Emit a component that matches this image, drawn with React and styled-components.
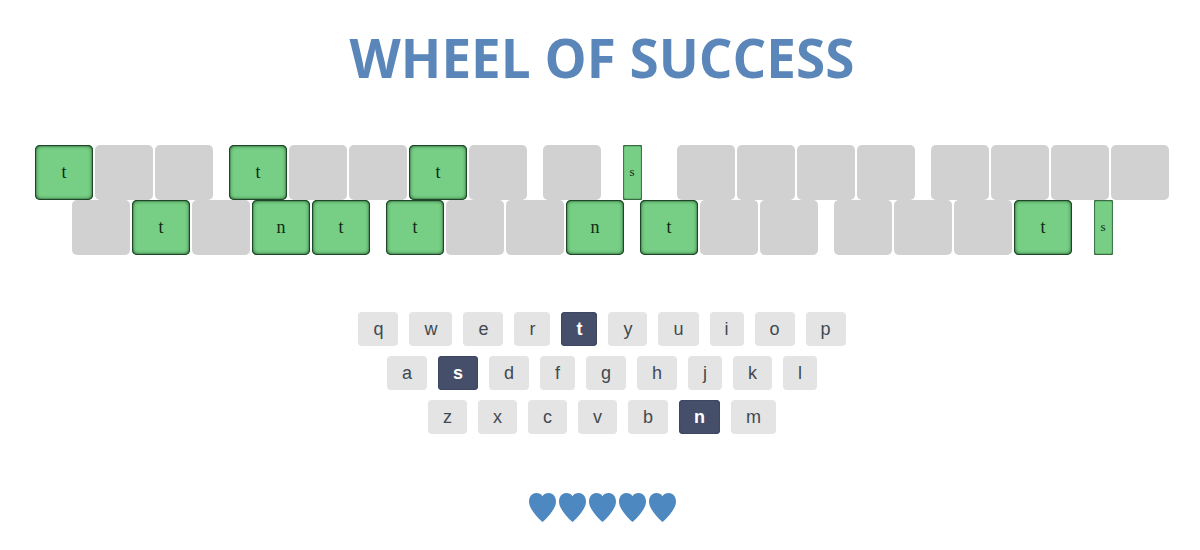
import React from "react";
import styled, { createGlobalStyle, css } from "styled-components";

const GlobalStyle = createGlobalStyle`
  *, *::before, *::after { box-sizing: border-box; }
  body {
    margin: 0;
    background: #fff;
    font-family: "Liberation Sans", Arial, sans-serif;
  }
`;

const Page = styled.div`
  display: flex;
  flex-direction: column;
  align-items: center;
  padding: 23px 0 23px 4px;
`;

const Title = styled.h1`
  margin: 0 0 52px;
  color: #5b86b9;
  font: 700 53px/70px "Open Sans", sans-serif;
  text-align: center;
`;

const Board = styled.main`
  display: flex;
  flex-direction: column;
  align-items: center;
`;

const Phrase = styled.div`
  display: flex;
  flex-wrap: wrap;
  justify-content: center;
  column-gap: 16px;
`;

const Word = styled.div`
  display: flex;
  gap: 2px;
`;

const Slot = styled.div`
  display: flex;
  justify-content: center;
  width: 58px;
`;

const Tile = styled.span`
  display: flex;
  align-items: center;
  justify-content: center;
  width: 100%;
  height: 55px;
  padding-bottom: 2px;
  border-radius: 5px;
  background: #d1d1d1;
  color: #0f2a15;
  font: 18px/20px "Liberation Serif", serif;
  ${(p) =>
    p.$shown &&
    css`
      background: #76cf84;
      box-shadow: inset 0 0 4px #0a2a10, inset 0 0 1px 1px #24502f;
    `}
  ${(p) =>
    p.$turning &&
    css`
      width: 19px;
      border-radius: 2px;
      box-shadow: inset 0 0 1px 1px #3c7247, inset 0 1px 1px #16351d,
        inset 0 -1px 1px #16351d;
      font-size: 13px;
    `}
`;

const Keyboard = styled.section`
  display: flex;
  flex-direction: column;
  gap: 10px;
  margin-top: 57px;
`;

const KeyRow = styled.div`
  display: flex;
  justify-content: center;
  gap: 11px;
`;

const Key = styled.button`
  height: 34px;
  padding: 0 15px;
  border: 0;
  border-radius: 4px;
  background: ${(p) => (p.$chosen ? "#454f69" : "#e4e4e4")};
  box-shadow: ${(p) => (p.$chosen ? "inset 0 0 1px 1px #3c4664" : "none")};
  color: ${(p) => (p.$chosen ? "#fff" : "#414951")};
  font: ${(p) => (p.$chosen ? 700 : 400)} 18px/34px "Liberation Sans", Arial, sans-serif;
`;

const Lives = styled.div`
  display: flex;
  gap: 3px;
  margin-top: 59px;
`;

const HeartIcon = styled.svg`
  display: block;
  width: 27px;
  height: 29px;
  fill: #4e88c0;
`;

const LINES = [
  ["t__", "t__t_", "_s", "____", "____"],
  ["_t_nt", "t__n", "t__", "___ts"],
];
const KEYS = ["qwertyuiop", "asdfghjkl", "zxcvbnm"];
const CHOSEN = ["t", "s", "n"];

function Letter({ value }) {
  const shown = value !== "_";
  return (
    <Slot>
      <Tile $shown={shown} $turning={value === "s"}>
        {shown ? value : null}
      </Tile>
    </Slot>
  );
}

function Heart() {
  return (
    <HeartIcon viewBox="0 0 27 29" aria-hidden="true">
      <path d="M13.5 29C11.4 27.2 8.2 24.2 5.2 20.2C2 16 0 12.4 0 8.6C0 3.6 2.9 0 7.2 0C10 0 12.3 1.2 13.5 3.2C14.7 1.2 17 0 19.8 0C24.1 0 27 3.6 27 8.6C27 12.4 25 16 21.8 20.2C18.8 24.2 15.6 27.2 13.5 29Z" />
    </HeartIcon>
  );
}

export default function App() {
  return (
    <Page>
      <GlobalStyle />
      <Title>WHEEL OF SUCCESS</Title>
      <Board>
        {LINES.map((line, i) => (
          <Phrase key={i}>
            {line.map((word, j) => (
              <Word key={j}>
                {[...word].map((c, k) => (
                  <Letter key={k} value={c} />
                ))}
              </Word>
            ))}
          </Phrase>
        ))}
      </Board>
      <Keyboard aria-label="Keyboard">
        {KEYS.map((row) => (
          <KeyRow key={row}>
            {[...row].map((c) => (
              <Key key={c} type="button" $chosen={CHOSEN.includes(c)}>
                {c}
              </Key>
            ))}
          </KeyRow>
        ))}
      </Keyboard>
      <Lives role="img" aria-label="5 lives">
        {[0, 1, 2, 3, 4].map((n) => (
          <Heart key={n} />
        ))}
      </Lives>
    </Page>
  );
}
